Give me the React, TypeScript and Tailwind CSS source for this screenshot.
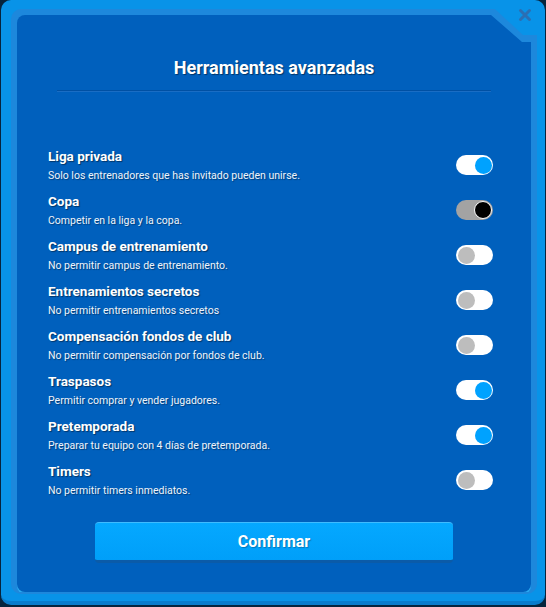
import React from "react";

type Row = { title: string; desc: string; state: "on" | "off" | "dark" };

const rows: Row[] = [
  { title: "Liga privada", desc: "Solo los entrenadores que has invitado pueden unirse.", state: "on" },
  { title: "Copa", desc: "Competir en la liga y la copa.", state: "dark" },
  { title: "Campus de entrenamiento", desc: "No permitir campus de entrenamiento.", state: "off" },
  { title: "Entrenamientos secretos", desc: "No permitir entrenamientos secretos", state: "off" },
  { title: "Compensación fondos de club", desc: "No permitir compensación por fondos de club.", state: "off" },
  { title: "Traspasos", desc: "Permitir comprar y vender jugadores.", state: "on" },
  { title: "Pretemporada", desc: "Preparar tu equipo con 4 días de pretemporada.", state: "on" },
  { title: "Timers", desc: "No permitir timers inmediatos.", state: "off" },
];

function Toggle({ state }: { state: Row["state"] }) {
  if (state === "on") {
    return (
      <div className="mt-[9px] flex h-[20px] w-[37px] shrink-0 items-center justify-end rounded-full bg-white px-[1.5px]">
        <div className="h-[17px] w-[17px] rounded-full bg-[#00a2ff]" />
      </div>
    );
  }
  if (state === "dark") {
    return (
      <div className="mt-[9px] flex h-[20px] w-[37px] shrink-0 items-center justify-end rounded-full bg-[#a3a3a3] px-[1px]">
        <div className="h-[18px] w-[18px] rounded-full border-[1.5px] border-white bg-black" />
      </div>
    );
  }
  return (
    <div className="mt-[9px] flex h-[20px] w-[37px] shrink-0 items-center justify-start rounded-full bg-white px-[1.5px]">
      <div className="h-[17px] w-[17px] rounded-full bg-[#bdbdbd]" />
    </div>
  );
}

export default function App() {
  return (
    <div
      className="relative h-[607px] w-[546px] overflow-hidden bg-[#06243d]"
      style={{ fontFamily: "Roboto, 'Noto Sans', 'Liberation Sans', sans-serif" }}
    >
      <div className="mx-[1px] h-[605px] rounded-[10px] border-b-[4px] border-[#0a7ccc] bg-[#0893e8] pl-[10px] pr-[8px] pt-[9px] pb-[7px]">
        <div className="h-full rounded-[10px] bg-[#1d88dc] px-[6px] pt-[6px] pb-[2px] [clip-path:polygon(0_0,calc(100%_-_42px)_0,calc(100%_-_14px)_26px,100%_26px,100%_100%,0_100%)]">
          <div className="flex h-full flex-col rounded-[8px] bg-[#0060bd] shadow-[0_2px_0_#2aaaf2] [clip-path:polygon(0_0,calc(100%_-_40px)_0,calc(100%_-_9px)_27px,100%_27px,100%_100%,0_100%)]">
            <div className="pt-[41px] text-center text-[18px] font-bold leading-[24px] text-white [text-shadow:1px_1px_1px_rgba(0,0,0,0.45)]">
              Herramientas avanzadas
            </div>
            <div className="mx-[40px] mt-[10px] h-[1px] bg-[#0050a3] shadow-[0_1px_0_#1a6dc4]" />
            <div className="mt-[55px] flex flex-col px-[31px] pr-[38px]">
              {rows.map((r) => (
                <div key={r.title} className="flex h-[45px] items-start justify-between">
                  <div className="flex flex-col">
                    <div className="text-[13.5px] font-bold leading-[21px] text-white [text-shadow:1px_1px_1px_rgba(0,0,0,0.45)]">
                      {r.title}
                    </div>
                    <div className="mt-[1px] text-[10.5px] leading-[16px] text-[#eef4fb] [text-shadow:1px_1px_1px_rgba(0,0,0,0.35)]">
                      {r.desc}
                    </div>
                  </div>
                  <Toggle state={r.state} />
                </div>
              ))}
            </div>
            <div className="mt-[16px] flex justify-center">
              <button className="h-[41px] w-[358px] rounded-[4px] border-t border-b-[3px] border-t-[#3fbcff] border-b-[#0b5ba8] bg-gradient-to-b from-[#05a8ff] to-[#009ff9] text-[16px] font-bold text-white [text-shadow:1px_1px_1px_rgba(0,0,0,0.25)]">
                Confirmar
              </button>
            </div>
          </div>
        </div>
      </div>
      <button className="absolute left-[518px] top-[8px] flex h-[14px] w-[14px] items-center justify-center" aria-label="Cerrar">
        <svg width="14" height="14" viewBox="0 0 14 14">
          <path d="M2.5 2.5 L11.5 11.5 M11.5 2.5 L2.5 11.5" stroke="#2b6fb3" strokeWidth="3" strokeLinecap="round" />
        </svg>
      </button>
    </div>
  );
}
